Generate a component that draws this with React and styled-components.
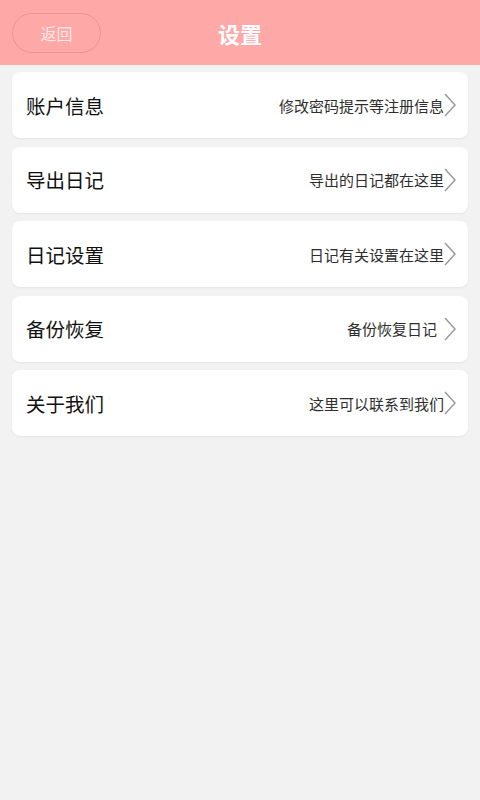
import styled, { createGlobalStyle } from "styled-components";

const GlobalStyle = createGlobalStyle`
    html, body {
        margin: 0;
        padding: 0;
        background: #f2f2f2;
        font-family: "Noto Sans CJK SC", "Noto Sans", sans-serif;
    }
`;

const items = [
    { title: "账户信息", hint: "修改密码提示等注册信息" },
    { title: "导出日记", hint: "导出的日记都在这里" },
    { title: "日记设置", hint: "日记有关设置在这里" },
    { title: "备份恢复", hint: "备份恢复日记", spaced: true },
    { title: "关于我们", hint: "这里可以联系到我们" },
];

const Page = styled.div`
    width: 480px;
    min-height: 800px;
    background: #f2f2f2;
`;

const Header = styled.div`
    height: 65px;
    background: #ffa8a8;
    display: grid;
    grid-template-columns: 120px 1fr 120px;
    align-items: center;
    padding: 0 12px;
    box-sizing: border-box;
`;

const BackButton = styled.button`
    width: 89px;
    height: 40px;
    border-radius: 20px;
    border: 1px solid #e99595;
    background: transparent;
    color: #fde8e8;
    font-family: inherit;
    font-size: 16px;
    padding: 0;
`;

const Title = styled.div`
    text-align: center;
    color: #fff;
    font-size: 22px;
    font-weight: 700;
`;

const List = styled.div`
    display: flex;
    flex-direction: column;
    gap: 8.5px;
    padding: 7px 12px;
`;

const Row = styled.div`
    height: 66px;
    background: #fff;
    border-radius: 8px;
    box-shadow: 0 1px 2px rgba(0, 0, 0, 0.06);
    display: flex;
    align-items: center;
    padding: 0 12px 0 14px;
`;

const RowTitle = styled.div`
    flex: 1;
    font-size: 19.5px;
    color: #111;
`;

const Hint = styled.div`
    font-size: 15px;
    color: #2e2e2e;
    margin-right: ${(p) => (p.$spaced ? "7px" : "0")};
`;

const Chevron = () => (
    <svg width="12" height="24" viewBox="0 0 12 24">
        <path d="M1 1 L11 12 L1 23" fill="none" stroke="#9a9a9a" strokeWidth="1.5" />
    </svg>
);

export default function App() {
    return (
        <Page>
            <GlobalStyle />
            <Header>
                <BackButton>返回</BackButton>
                <Title>设置</Title>
                <div />
            </Header>
            <List>
                {items.map((item) => (
                    <Row key={item.title}>
                        <RowTitle>{item.title}</RowTitle>
                        <Hint $spaced={item.spaced}>{item.hint}</Hint>
                        <Chevron />
                    </Row>
                ))}
            </List>
        </Page>
    );
}
